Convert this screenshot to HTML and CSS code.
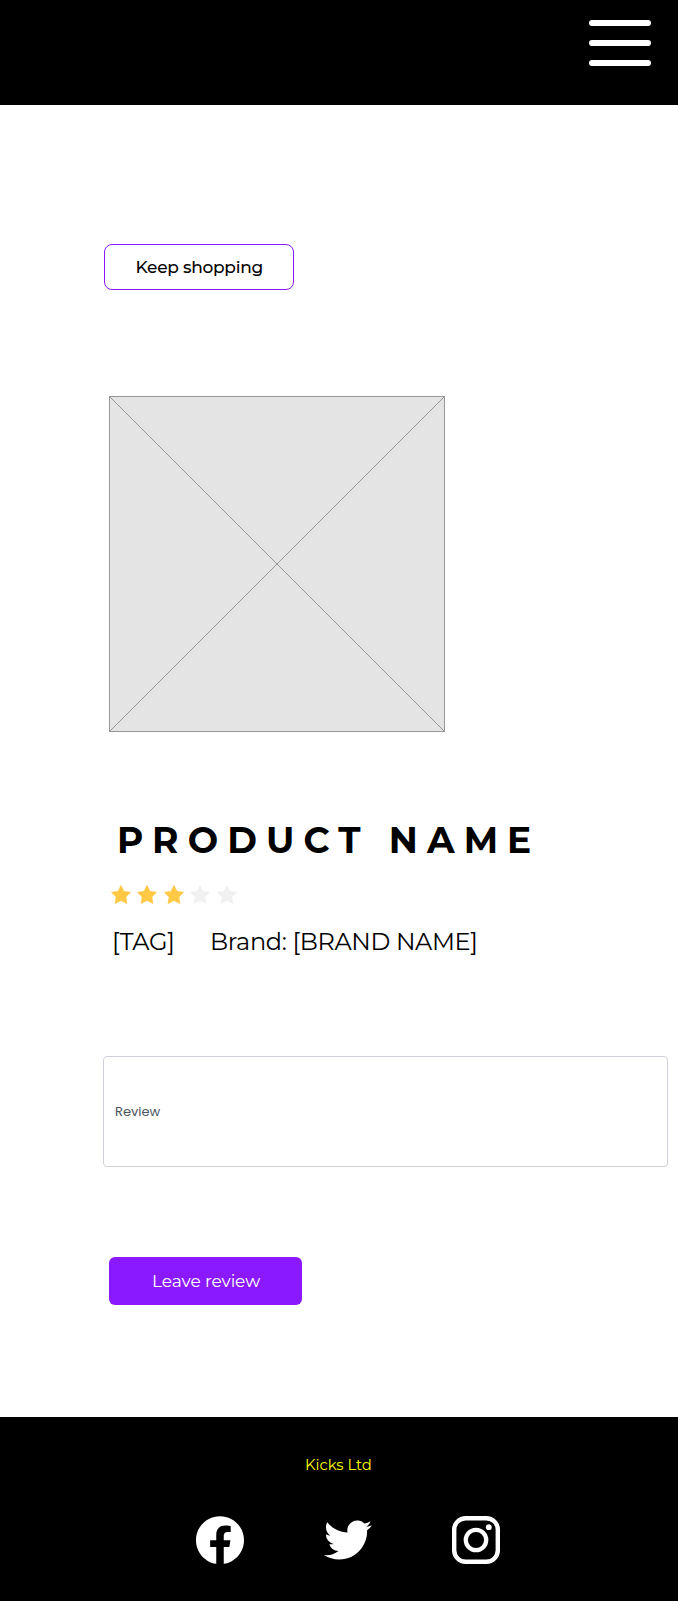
FILE: index.html
```html
<!DOCTYPE html>
<html lang="en">
<head>
<meta charset="utf-8">
<title>Kicks Ltd</title>
<link rel="stylesheet" href="styles.css">
</head>
<body>
<header class="header">
  <button class="menu" aria-label="Menu"><span class="bar"></span><span class="bar"></span><span class="bar"></span></button>
</header>
<main class="main">
  <button class="btn btn-outline"><span class="keep-label">Keep shopping</span></button>
  <svg class="photo" viewBox="0 0 336 336">
    <rect x=".5" y=".5" width="335" height="335" fill="#e4e4e4" stroke="#979797"/>
    <path d="M.5 .5l335 335M335.5 .5l-335 335" stroke="#979797" fill="none"/>
  </svg>
  <h1 class="title">PRODUCT NAME</h1>
  <div class="stars">
    <svg class="star" viewBox="0 0 20 19"><path d="M10 .5l3 5.900 6.500.9-4.700 4.600 1.100 6.600-5.900-3.100-5.900 3.100 1.100-6.600L.5 7.300 7 6.400z"/></svg>
    <svg class="star" viewBox="0 0 20 19"><path d="M10 .5l3 5.900 6.500.9-4.700 4.600 1.100 6.600-5.900-3.100-5.900 3.100 1.100-6.600L.5 7.300 7 6.400z"/></svg>
    <svg class="star" viewBox="0 0 20 19"><path d="M10 .5l3 5.900 6.500.9-4.700 4.600 1.100 6.600-5.900-3.100-5.900 3.100 1.100-6.600L.5 7.300 7 6.400z"/></svg>
    <svg class="star star-empty" viewBox="0 0 20 19"><path d="M10 .5l3 5.900 6.500.9-4.700 4.600 1.100 6.600-5.900-3.100-5.900 3.100 1.100-6.600L.5 7.300 7 6.400z"/></svg>
    <svg class="star star-empty" viewBox="0 0 20 19"><path d="M10 .5l3 5.900 6.500.9-4.700 4.600 1.100 6.600-5.900-3.100-5.900 3.100 1.100-6.600L.5 7.300 7 6.400z"/></svg>
  </div>
  <div class="meta"><span class="tag">[TAG]</span><span class="brand">Brand: [BRAND NAME]</span></div>
  <div class="review"><span class="review-label">Review</span></div>
  <button class="btn btn-primary"><span class="leave-label">Leave review</span></button>
</main>
<footer class="footer">
  <div class="company">Kicks Ltd</div>
  <div class="social">
    <svg class="icon" viewBox="0 0 24 24"><path d="M24 12.073c0-6.627-5.373-12-12-12s-12 5.373-12 12c0 5.990 4.388 10.954 10.125 11.854v-8.385H7.078v-3.470h3.047V9.430c0-3.007 1.792-4.669 4.533-4.669 1.312 0 2.686.235 2.686.235v2.953H15.830c-1.491 0-1.956.925-1.956 1.874v2.250h3.328l-.532 3.470h-2.796v8.385C19.612 23.027 24 18.062 24 12.073z"/></svg>
    <svg class="icon" viewBox="0 0 24 24"><path d="M23.953 4.570a10 10 0 01-2.825.775 4.958 4.958 0 002.163-2.723c-.951.555-2.005.959-3.127 1.184a4.920 4.920 0 00-8.384 4.482C7.690 8.095 4.067 6.130 1.640 3.162a4.822 4.822 0 00-.666 2.475c0 1.710.870 3.213 2.188 4.096a4.904 4.904 0 01-2.228-.616v.060a4.923 4.923 0 003.946 4.827 4.996 4.996 0 01-2.212.085 4.936 4.936 0 004.604 3.417 9.867 9.867 0 01-6.102 2.105c-.390 0-.779-.023-1.170-.067a13.995 13.995 0 007.557 2.209c9.053 0 13.998-7.496 13.998-13.985 0-.210 0-.420-.015-.630A9.935 9.935 0 0024 4.590z"/></svg>
    <svg class="icon" viewBox="0 0 48 48"><rect x="2.200" y="2.200" width="43.600" height="43.600" rx="11.500" fill="none" stroke="#fff" stroke-width="4.400"/><circle cx="24" cy="24" r="10.200" fill="none" stroke="#fff" stroke-width="4.300"/><circle cx="36.800" cy="11.200" r="2.900"/></svg>
  </div>
</footer>
</body>
</html>
```
FILE: styles.css
```css
* { box-sizing: border-box; }
body { margin: 0; min-height: 1601px; display: flex; flex-direction: column; background: #fff; color: #000; font-family: Montserrat, Inter, sans-serif; }
button { font-family: inherit; padding: 0; border: 0; }
svg { display: block; }
span { white-space: nowrap; }
.header { height: 105px; background: #000; display: flex; justify-content: flex-end; padding: 20px 27px 0 0; }
.menu { width: 62px; height: 46px; background: none; display: flex; flex-direction: column; gap: 14px; }
.bar { width: 62px; height: 6px; border-radius: 3px; background: #fff; }
.main { height: 1312px; padding: 139px 10px 0 103px; display: flex; flex-direction: column; align-items: flex-start; }
.btn { display: flex; align-items: center; font-size: 17px; }
.btn-outline { width: 190px; height: 46px; margin-left: 1px; padding-left: 30.500px; border: 1px solid #8b19ff; border-radius: 8px; background: #fff; color: #000; font-weight: 500; }
.keep-label { letter-spacing: -.27px; }
.photo { width: 336px; height: 336px; margin: 106px 0 0 6px; }
.title { margin: 86px 0 0 14px; font-size: 36px; line-height: 44px; font-weight: 700; letter-spacing: 9.100px; white-space: nowrap; }
.stars { display: flex; gap: 6.600px; margin: 23px 0 0 7.500px; }
.star { width: 20px; height: 19px; fill: #ffc845; stroke: #ffc845; stroke-width: .7; stroke-linejoin: round; }
.star-empty { fill: #f1f1f1; stroke: #f1f1f1; }
.meta { margin: 22px 0 0 9px; display: flex; font-size: 24px; line-height: 32px; font-weight: 400; letter-spacing: -.34px; }
.tag { width: 98px; }
.review { width: 565px; height: 111px; margin-top: 98px; padding-left: 11px; border: 1px solid #cfd1da; border-radius: 4px; display: flex; align-items: center; }
.review-label { font-family: Poppins, Montserrat, sans-serif; font-size: 13px; line-height: 20px; color: #4b5563; }
.btn-primary { width: 193px; height: 48px; margin: 90px 0 0 6px; padding-left: 43px; border-radius: 6px; background: #8b19ff; color: #fff; }
.leave-label { letter-spacing: -.08px; }
.footer { height: 184px; background: #000; padding-top: 36px; }
.company { margin-left: 305px; font-size: 14.800px; line-height: 24px; color: #ff0; }
.social { display: flex; gap: 80px; margin: 39px 0 0 196px; }
.icon { width: 48px; height: 48px; fill: #fff; }
```
